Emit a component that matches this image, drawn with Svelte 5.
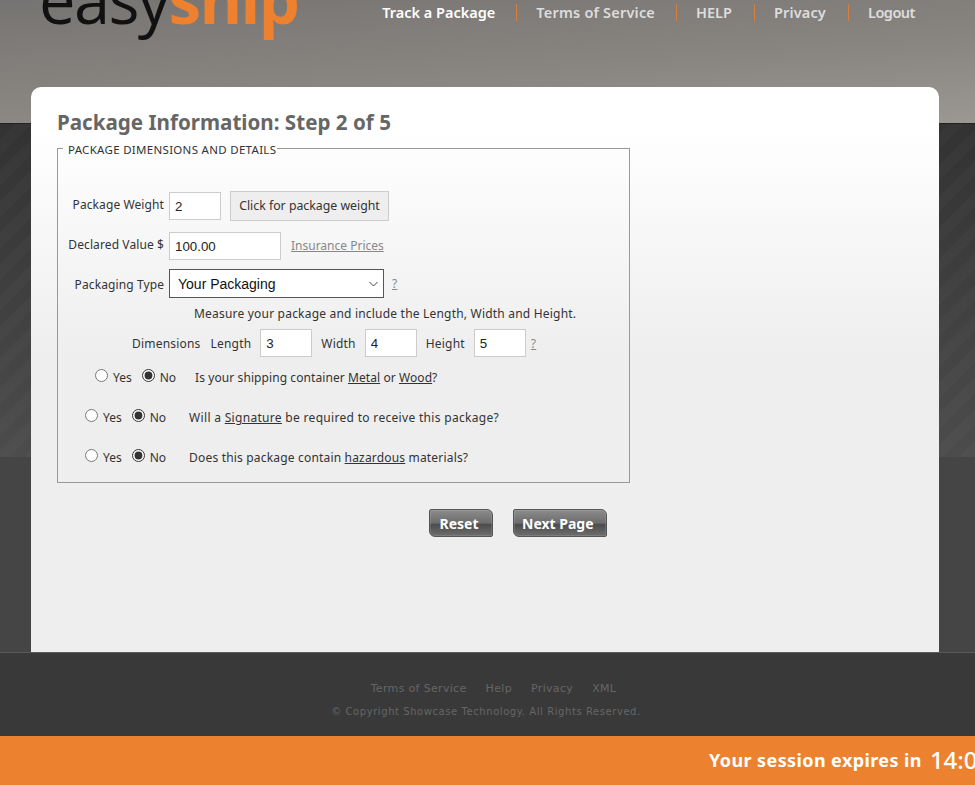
<script>
  const nav = ['Track a Package', 'Terms of Service', 'HELP', 'Privacy', 'Logout'];
  const footerLinks = ['Terms of Service', 'Help', 'Privacy', 'XML'];
</script>

<div class="page">
  <header class="top">
    <div class="logo"><span class="easy">easy</span><span class="ship">ship</span></div>
    <nav class="nav">
      {#each nav as item, i}
        <a href="#n" class:active={i === 0}>{item}</a>
      {/each}
    </nav>
  </header>

  <main class="panel">
    <h1>Package Information: Step 2 of 5</h1>
    <fieldset>
      <legend>PACKAGE DIMENSIONS AND DETAILS</legend>

      <div class="row r-weight">
        <label for="w">Package Weight</label>
        <input id="w" class="small" value="2" />
        <button class="weight">Click for package weight</button>
      </div>

      <div class="row r-value">
        <label for="v">Declared Value $</label>
        <input id="v" class="wide" value="100.00" />
        <a class="muted" href="#i">Insurance Prices</a>
      </div>

      <div class="row r-type">
        <label for="t">Packaging Type</label>
        <select id="t"><option>Your Packaging</option></select>
        <a class="q" href="#q">?</a>
      </div>

      <p class="measure">Measure your package and include the Length, Width and Height.</p>

      <div class="row r-dims">
        <span>Dimensions</span>
        <span class="lbl-l">Length</span><input class="small" value="3" />
        <span class="lbl">Width</span><input class="small" value="4" />
        <span class="lbl">Height</span><input class="small" value="5" />
        <a class="q q2" href="#q">?</a>
      </div>

      <div class="row yn yn1">
        <input type="radio" name="a" /><span class="yes">Yes</span>
        <input type="radio" name="a" checked /><span class="no">No</span>
        <span class="ask">Is your shipping container <a href="#m">Metal</a> or <a href="#o">Wood</a>?</span>
      </div>
      <div class="row yn yn2">
        <input type="radio" name="b" /><span class="yes">Yes</span>
        <input type="radio" name="b" checked /><span class="no">No</span>
        <span class="ask">Will a <a href="#s">Signature</a> be required to receive this package?</span>
      </div>
      <div class="row yn yn3">
        <input type="radio" name="c" /><span class="yes">Yes</span>
        <input type="radio" name="c" checked /><span class="no">No</span>
        <span class="ask">Does this package contain <a href="#h">hazardous</a> materials?</span>
      </div>
    </fieldset>

    <div class="actions">
      <button class="dark reset">Reset</button>
      <button class="dark next">Next Page</button>
    </div>
  </main>

  <footer class="foot">
    <div class="flinks">
      {#each footerLinks as l}<a href="#f">{l}</a>{/each}
    </div>
    <div class="copy">© Copyright Showcase Technology. All Rights Reserved.</div>
  </footer>

  <div class="session">
    <span class="msg">Your session expires in</span><span class="time">14:00</span>
  </div>
</div>

<style>
  :global(body) { margin: 0; overflow: hidden; background: #3a3a3a; }
  .page {
    width: 975px; height: 785px; overflow: hidden;
    font-family: "Noto Sans", "DejaVu Sans", sans-serif;
    font-size: 12px; letter-spacing: 0.2px; color: #333;
    background:
      repeating-linear-gradient(135deg, rgba(255,255,255,0) 0 11px, rgba(255,255,255,0.02) 11px 22px) 0 124px / 100% 333px no-repeat,
      linear-gradient(#323232, #4c4c4c) 0 124px / 100% 333px no-repeat,
      #454545;
  }
  .top {
    height: 124px; box-sizing: border-box; margin-bottom: -37px;
    border-bottom: 1px solid #222;
    background: linear-gradient(176deg, #767472 0%, #8a8682 60%, #9b9791 100%);
    display: flex; justify-content: space-between; align-items: flex-start;
    overflow: hidden;
  }
  .logo {
    margin: -33px 0 0 39px; font-family: "Open Sans", sans-serif;
    font-size: 65px; line-height: 65px; letter-spacing: -1.6px; color: #111;
  }
  .ship { color: #ed8130; font-weight: 700; }
  .nav { display: flex; margin: 4px 0 0; padding-right: 60px; }
  .nav a {
    color: #ddd; text-decoration: none; font-weight: 600; font-size: 14.5px; line-height: 17px; letter-spacing: 0;
    padding: 0 21px 0 19px; border-left: 1px solid #d97f3a; height: 17px;
  }
  .nav a:first-child { border-left: 0; }
  .nav a:nth-child(2) { letter-spacing: 0.2px; }
  .nav a:nth-child(3) { padding-right: 22px; }
  .nav a:nth-child(4) { letter-spacing: 0.15px; padding-right: 22px; }
  .nav a:last-child { padding-right: 0; letter-spacing: -0.5px; }
  .nav a.active { color: #fff; }

  .panel {
    position: relative;
    width: 908px; height: 565px; margin-left: 31px; box-sizing: border-box;
    padding: 21px 26px 0;
    border-radius: 10px 10px 0 0;
    background: linear-gradient(#fff 40px, #eee 270px);
  }
  h1 {
    margin: 0 0 3px; font-size: 20.6px; line-height: 28px; font-weight: 700; color: #666; letter-spacing: 0;
  }
  fieldset {
    margin: 0; padding: 0; width: 573px; height: 344px; box-sizing: border-box;
    border: 1px solid #999; position: relative;
  }
  legend { margin-left: 5px; padding: 4px 1px 0 5px; font-size: 11.5px; line-height: 14px; color: #333; letter-spacing: 0.3px; }
  .row { display: flex; align-items: center; }
  label, .row span { white-space: nowrap; }
  input:not([type=radio]) {
    box-sizing: border-box; height: 28px; border: 1px solid #ccc; margin: 0; padding: 0 5px;
    font: 13.3px "Liberation Sans", sans-serif; background: #fff; color: #222; letter-spacing: 0;
  }
  .small { width: 52px; }
  .wide { width: 112px; }
  label { text-align: right; width: 106px; margin-right: 5px; letter-spacing: 0.1px; }
  .r-weight label, .r-value label { margin-bottom: 3px; }
  .r-type label { margin-top: 1px; }
  .r-weight { margin-top: 34px; }
  .r-value { margin-top: 11px; }
  .r-type { margin-top: 9px; }
  .weight {
    margin-left: 9px; height: 30px; width: 159px; padding: 0 0 2px; border: 1px solid #ccc; background: #eee;
    font: 12.3px "Noto Sans", sans-serif; color: #333; letter-spacing: 0;
  }
  .muted { margin: 0 0 2px 10px; color: #888; text-decoration: underline; letter-spacing: 0; }
  select {
    box-sizing: border-box; width: 215px; height: 29px; border: 1px solid #555; padding-left: 8px;
    font: 14px "Liberation Sans", sans-serif; color: #111; letter-spacing: 0;
    appearance: none;
    background: #fff url("data:image/svg+xml,%3Csvg xmlns='http://www.w3.org/2000/svg' width='9' height='6'%3E%3Cpath d='M.5 1l4 4 4-4' fill='none' stroke='%23444'/%3E%3C/svg%3E") no-repeat right 5px center;
  }
  .q { margin-left: 8px; color: #888; text-decoration: underline; }
  .q2 { margin-left: 5px; }
  .measure { margin: 7px 0 0 136px; line-height: 18px; white-space: nowrap; }
  .r-dims { margin: 6px 0 0 74px; }
  .lbl-l { margin: 0 9px 0 10px; }
  .lbl { margin: 0 9px 0 9px; }
  .yn input { margin: 0; width: 13px; height: 13px; accent-color: #333; position: relative; top: -2px; }
  .yes { margin: 0 10px 0 5px; letter-spacing: 0; }
  .no { margin-left: 5px; letter-spacing: 0; }
  .yn a { color: #333; }
  .yn1 { margin: 12px 0 0 37px; }
  .yn1 .ask { margin-left: 19px; letter-spacing: 0.08px; }
  .yn2 { margin: 23px 0 0 27px; }
  .yn3 { margin: 23px 0 0 27px; }
  .yn2 .ask { margin-left: 23px; letter-spacing: 0.31px; }
  .yn3 .ask { margin-left: 23px; letter-spacing: 0.18px; }

  .actions { display: flex; gap: 20px; margin: 26px 0 0 372px; }
  .dark {
    height: 28px; color: #fff; font: 700 14px "Noto Sans", sans-serif; letter-spacing: 0;
    border: 1px solid #555; border-radius: 2px 6px 2px 6px;
    background: linear-gradient(#8c8c8c, #6c6c6c 50%, #4c4c4c 56%, #6e6e6e);
    box-shadow: inset 0 0 0 1px rgba(255,255,255,0.12);
  }
  .reset { padding: 0 13.5px 0 9.5px; }
  .next { padding: 0 12px 0 8px; }

  .foot {
    height: 84px; box-sizing: border-box; background: #393939; border-top: 1px solid #5a5a5a;
    text-align: center; font-family: "DejaVu Sans", sans-serif; color: #666;
  }
  .flinks { display: flex; justify-content: center; gap: 19px; padding: 29px 0 0 12px; font-size: 11px; line-height: 14px; letter-spacing: 0.33px; }
  .flinks a { color: #666; text-decoration: none; }
  .copy { margin-top: 9px; padding-right: 3px; font-size: 10px; line-height: 14px; letter-spacing: 0.57px; }

  .session {
    height: 49px; background: #ec8230; color: #fff; display: flex; align-items: center; white-space: nowrap;
    padding: 0 0 2px 709px; box-sizing: border-box; font-weight: 700; font-size: 18px; letter-spacing: 0.4px;
  }
  .time { margin-left: 8px; font-size: 24px; font-weight: 500; letter-spacing: 0; }
</style>
